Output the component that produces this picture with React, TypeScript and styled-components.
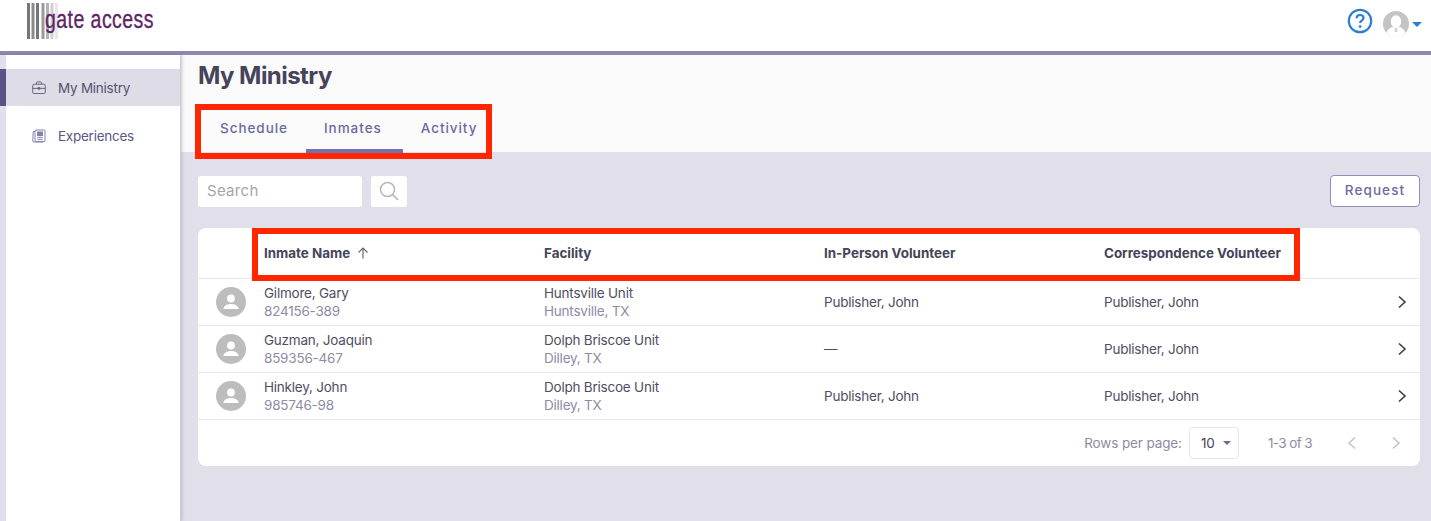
import styled, { createGlobalStyle } from "styled-components"
import { ReactNode } from "react"

const GlobalStyle = createGlobalStyle`
    html, body { margin: 0; padding: 0; height: 100%; overflow: hidden; }
    body { font-family: "Inter", "Open Sans", sans-serif; color: #45445a; background: #e1e0ea; }
    * { box-sizing: border-box; }
`
const Page = styled.div`
    width: 1431px;
    height: 521px;
    display: flex;
    flex-direction: column;
    position: relative;
    overflow: hidden;
`
const TopBar = styled.header`
    height: 55px;
    flex: none;
    display: flex;
    align-items: flex-start;
    justify-content: space-between;
    background: #fff;
    border-bottom: 4px solid #8f88ae;
    padding: 2px 9px 0 26px;
`
const Logo = styled.div`
    display: flex;
    align-items: flex-start;
    height: 38px;
`
const LogoText = styled.span`
    font-family: "Liberation Sans", sans-serif;
    font-size: 26px;
    line-height: 34px;
    color: #5e2565;
    display: inline-block;
    margin-left: -14px;
    transform: scaleX(0.75);
    transform-origin: 0 0;
    white-space: nowrap;
    letter-spacing: 0.6px;
    -webkit-text-stroke: 0.35px #5e2565;
`
const TopActions = styled.div`
    display: flex;
    align-items: flex-start;
    gap: 10px;
    padding-top: 6px;
`
const Caret = styled.span<{ $color: string; $size: number }>`
    display: block;
    flex: none;
    width: 0;
    height: 0;
    border-left: ${p => p.$size}px solid transparent;
    border-right: ${p => p.$size}px solid transparent;
    border-top: ${p => p.$size}px solid ${p => p.$color};
`
const UserMenu = styled.div`
    display: flex;
    align-items: center;
    gap: 3px;
    margin-top: 3px;
`
const Body = styled.div`
    flex: 1;
    display: flex;
    min-height: 0;
`
const Sidebar = styled.nav`
    width: 181px;
    flex: none;
    background: #fff;
    border-left: 6px solid #e1e0ea;
    border-right: 1px solid #cfced6;
    box-shadow: 1px 0 3px rgba(60, 60, 80, 0.25);
    padding-top: 14px;
    display: flex;
    flex-direction: column;
    gap: 11px;
    position: relative;
`
const NavItem = styled.div<{ $active?: boolean }>`
    height: 37px;
    display: flex;
    align-items: center;
    gap: 12px;
    padding-left: 26px;
    font-size: 13.5px;
    letter-spacing: -0.25px;
    color: ${p => (p.$active ? "#55546d" : "#5c5887")};
    background: ${p => (p.$active ? "#dedce7" : "transparent")};
    box-shadow: ${p => (p.$active ? "-6px 0 0 #5b5288" : "none")};
`
const Main = styled.main`
    flex: 1;
    display: flex;
    flex-direction: column;
    min-width: 0;
`
const PageHead = styled.div`
    height: 97px;
    flex: none;
    background: #fafafa;
    padding: 5px 0 0 17px;
    display: flex;
    flex-direction: column;
`
const Title = styled.h1`
    margin: 0;
    font-size: 24px;
    line-height: 32px;
    font-weight: 700;
    color: #45445a;
    letter-spacing: -0.55px;
`
const Tabs = styled.div`
    display: flex;
    margin-top: 14px;
    padding-left: 4px;
`
const Tab = styled.div<{ $active?: boolean }>`
    height: 47px;
    padding: 12px ${p => (p.$active ? 21 : 18)}px 0 18px;
    display: flex;
    align-items: flex-start;
    justify-content: center;
    font-size: 13.5px;
    line-height: 20px;
    font-weight: 500;
    letter-spacing: 0.95px;
    color: #6b6a9f;
    border-bottom: 4px solid ${p => (p.$active ? "#7472ac" : "transparent")};
`
const Content = styled.div`
    flex: 1;
    padding: 23px 11px 0 17px;
    display: flex;
    flex-direction: column;
`
const Toolbar = styled.div`
    display: flex;
    align-items: center;
    gap: 9px;
    height: 32px;
    margin-bottom: 21px;
`
const SearchBox = styled.div`
    width: 164px;
    height: 31px;
    background: #fff;
    border-radius: 3px;
    padding: 0 0 2px 9px;
    display: flex;
    align-items: center;
    font-size: 15px;
    letter-spacing: 0.3px;
    color: #a5a5a8;
`
const SearchButton = styled.div`
    width: 36px;
    height: 31px;
    background: #fff;
    border-radius: 3px;
    display: flex;
    align-items: center;
    justify-content: center;
`
const RequestButton = styled.div`
    margin-left: auto;
    width: 90px;
    height: 32px;
    background: #fff;
    border: 1px solid #8f8fbe;
    border-radius: 4px;
    padding-bottom: 2px;
    display: flex;
    align-items: center;
    justify-content: center;
    font-size: 13.5px;
    font-weight: 500;
    letter-spacing: 1.1px;
    color: #6b6a9f;
`
const Card = styled.section`
    background: #fff;
    border-radius: 8px;
    display: flex;
    flex-direction: column;
`
const Row = styled.div<{ $height: number }>`
    display: grid;
    grid-template-columns: 66px 280px 280px 280px 1fr 36px;
    align-items: center;
    height: ${p => p.$height}px;
    border-bottom: 1px solid #e8e8ec;
`
const HeadCell = styled.div`
    display: flex;
    align-items: center;
    gap: 7px;
    font-size: 13.4px;
    font-weight: 700;
    color: #45445a;
    white-space: nowrap;
`
const Cell = styled.div`
    font-size: 13.5px;
    line-height: 18px;
    letter-spacing: -0.22px;
    color: #4f4e62;
    white-space: nowrap;
`
const SubLine = styled.div`
    color: #8d8ca3;
`
const AvatarCell = styled.div`
    display: flex;
    justify-content: flex-end;
    padding-right: 18px;
`
const Chevron = styled.div`
    display: flex;
    align-items: center;
    justify-content: flex-start;
    padding-left: 13px;
`
const Pager = styled.div`
    height: 46px;
    display: flex;
    align-items: center;
    justify-content: flex-end;
    padding-right: 19px;
    font-size: 13.5px;
    letter-spacing: -0.12px;
    color: #8d8ca3;
`
const RowsSelect = styled.div`
    width: 50px;
    height: 32px;
    margin-left: 7px;
    border: 1px solid #e6e6ea;
    border-radius: 4px;
    display: flex;
    align-items: center;
    justify-content: space-between;
    padding: 0 7px 0 11px;
    color: #45445a;
`
const PageCount = styled.span`
    margin: 0 35px 0 29px;
    letter-spacing: -0.6px;
`
const PagerArrows = styled.div`
    display: flex;
    gap: 34px;
    align-items: center;
`
const Highlight = styled.div<{ $x: number; $y: number; $w: number; $h: number }>`
    position: absolute;
    left: ${p => p.$x}px;
    top: ${p => p.$y}px;
    width: ${p => p.$w}px;
    height: ${p => p.$h}px;
    border: 6px solid #ff2600;
    pointer-events: none;
`

function LogoBars() {
    const bars = [
        [1, "#77767a"], [5.5, "#8b8a8e"], [10, "#77767a"], [15.5, "#9a999d"],
        [20, "#b3b2b5"], [24.5, "#cfcfd1"], [29, "#e8e8e9"],
    ] as const
    return (
        <svg width="33" height="38" viewBox="0 0 33 38">
            {bars.map(([x, c]) => <rect key={x} x={x} y="1" width="3" height="36" fill={c} />)}
        </svg>
    )
}

function HelpIcon() {
    return (
        <svg width="26" height="26" viewBox="0 0 26 26" fill="none">
            <circle cx="13" cy="13" r="11.2" stroke="#2a7ed3" strokeWidth="2.2" />
            <path d="M9.6 10.2c0-2 1.5-3.2 3.5-3.2s3.4 1.2 3.4 2.9c0 2.6-3.4 2.6-3.4 5" stroke="#2a7ed3" strokeWidth="2.2" />
            <circle cx="13.1" cy="18.6" r="1.4" fill="#2a7ed3" />
        </svg>
    )
}

function UserPhoto() {
    return (
        <svg width="26" height="26" viewBox="0 0 26 26">
            <circle cx="13" cy="13" r="13" fill="#c4c4c4" />
            <ellipse cx="13" cy="10.5" rx="5.2" ry="6.2" fill="#fff" />
            <path d="M3.5 22c1-4.5 5-5.6 7-6.2h5c2 .6 6 1.7 7 6.2a13 13 0 0 1-19 0z" fill="#fff" />
            <path d="M12 17h2l.4 4h-2.8z" fill="#d0d0d0" />
        </svg>
    )
}

function BriefcaseIcon() {
    return (
        <svg width="14" height="14" viewBox="0 0 14 14" fill="none" stroke="#6a6880" strokeWidth="1">
            <rect x="0.7" y="3.2" width="12.6" height="9.3" rx="1.4" />
            <path d="M4.5 3.2V1.6c0-.4.3-.7.7-.7h3.6c.4 0 .7.3.7.7v1.6M.7 7.4h12.6M6 6.6h2v1.6H6z" />
        </svg>
    )
}

function BookIcon() {
    return (
        <svg width="14" height="14" viewBox="0 0 14 14" fill="none" stroke="#8480ad" strokeWidth="1">
            <rect x="3" y="1" width="10" height="11.5" rx="1" />
            <path d="M3 2.5H1.2L.8 12c0 .6.4 1 1 1h9.5" />
            <rect x="5.5" y="3" width="5" height="3.5" fill="#8480ad" />
            <path d="M5.3 8.3h5.4M5.3 10.3h5.4" />
        </svg>
    )
}

function SearchIcon() {
    return (
        <svg width="20" height="20" viewBox="0 0 20 20" fill="none" stroke="#b5b5b7" strokeWidth="1.5">
            <circle cx="8.5" cy="8.5" r="7" />
            <path d="M13.6 13.6l5.4 5.4" />
        </svg>
    )
}

function SortArrow() {
    return (
        <svg width="12" height="12" viewBox="0 0 12 12" fill="none" stroke="#6a6a72" strokeWidth="1.2">
            <path d="M6 11.5V1M1.5 5.5L6 1l4.5 4.5" />
        </svg>
    )
}

function Avatar() {
    return (
        <svg width="30" height="30" viewBox="0 0 30 30">
            <circle cx="15" cy="15" r="15" fill="#bdbdbd" />
            <circle cx="15" cy="11.5" r="3.9" fill="#fff" />
            <path d="M7.5 21.5c0-3.2 5-4.6 7.5-4.6s7.5 1.4 7.5 4.6v.6h-15z" fill="#fff" />
        </svg>
    )
}

function Arrow({ dir, color, size = 1.6 }: { dir: "left" | "right"; color: string; size?: number }) {
    return (
        <svg width="10" height="14" viewBox="0 0 10 14" fill="none" stroke={color} strokeWidth={size}>
            <path d={dir === "right" ? "M2 1.5L8 7l-6 5.5" : "M8 1.5L2 7l6 5.5"} />
        </svg>
    )
}

type Inmate = {
    name: string
    number: string
    facility: string
    city: string
    inPerson: string
    correspondence: string
}

const inmates: Inmate[] = [
    { name: "Gilmore, Gary", number: "824156-389", facility: "Huntsville Unit", city: "Huntsville, TX", inPerson: "Publisher, John", correspondence: "Publisher, John" },
    { name: "Guzman, Joaquin", number: "859356-467", facility: "Dolph Briscoe Unit", city: "Dilley, TX", inPerson: "—", correspondence: "Publisher, John" },
    { name: "Hinkley, John", number: "985746-98", facility: "Dolph Briscoe Unit", city: "Dilley, TX", inPerson: "Publisher, John", correspondence: "Publisher, John" },
]

function Stacked({ top, bottom }: { top: ReactNode; bottom: ReactNode }) {
    return (
        <Cell>
            <div>{top}</div>
            <SubLine>{bottom}</SubLine>
        </Cell>
    )
}

export default function App() {
    return (
        <Page>
            <GlobalStyle />
            <TopBar>
                <Logo>
                    <LogoBars />
                    <LogoText>gate access</LogoText>
                </Logo>
                <TopActions>
                    <HelpIcon />
                    <UserMenu>
                        <UserPhoto />
                        <Caret $color="#2a7ed3" $size={5} />
                    </UserMenu>
                </TopActions>
            </TopBar>
            <Body>
                <Sidebar>
                    <NavItem $active><BriefcaseIcon />My Ministry</NavItem>
                    <NavItem><BookIcon />Experiences</NavItem>
                </Sidebar>
                <Main>
                    <PageHead>
                        <Title>My Ministry</Title>
                        <Tabs>
                            <Tab>Schedule</Tab>
                            <Tab $active>Inmates</Tab>
                            <Tab>Activity</Tab>
                        </Tabs>
                    </PageHead>
                    <Content>
                        <Toolbar>
                            <SearchBox>Search</SearchBox>
                            <SearchButton><SearchIcon /></SearchButton>
                            <RequestButton>Request</RequestButton>
                        </Toolbar>
                        <Card>
                            <Row $height={51}>
                                <div />
                                <HeadCell>Inmate Name <SortArrow /></HeadCell>
                                <HeadCell>Facility</HeadCell>
                                <HeadCell>In-Person Volunteer</HeadCell>
                                <HeadCell>Correspondence Volunteer</HeadCell>
                                <div />
                            </Row>
                            {inmates.map(i => (
                                <Row $height={47} key={i.number}>
                                    <AvatarCell><Avatar /></AvatarCell>
                                    <Stacked top={i.name} bottom={i.number} />
                                    <Stacked top={i.facility} bottom={i.city} />
                                    <Cell>{i.inPerson}</Cell>
                                    <Cell>{i.correspondence}</Cell>
                                    <Chevron><Arrow dir="right" color="#3c3c48" /></Chevron>
                                </Row>
                            ))}
                            <Pager>
                                Rows per page:
                                <RowsSelect>10<Caret $color="#6b6a9f" $size={4} /></RowsSelect>
                                <PageCount>1-3 of 3</PageCount>
                                <PagerArrows>
                                    <Arrow dir="left" color="#c4c4c8" />
                                    <Arrow dir="right" color="#c4c4c8" />
                                </PagerArrows>
                            </Pager>
                        </Card>
                    </Content>
                </Main>
            </Body>
            <Highlight $x={195} $y={104} $w={297} $h={55} />
            <Highlight $x={252} $y={228} $w={1048} $h={53} />
        </Page>
    )
}
